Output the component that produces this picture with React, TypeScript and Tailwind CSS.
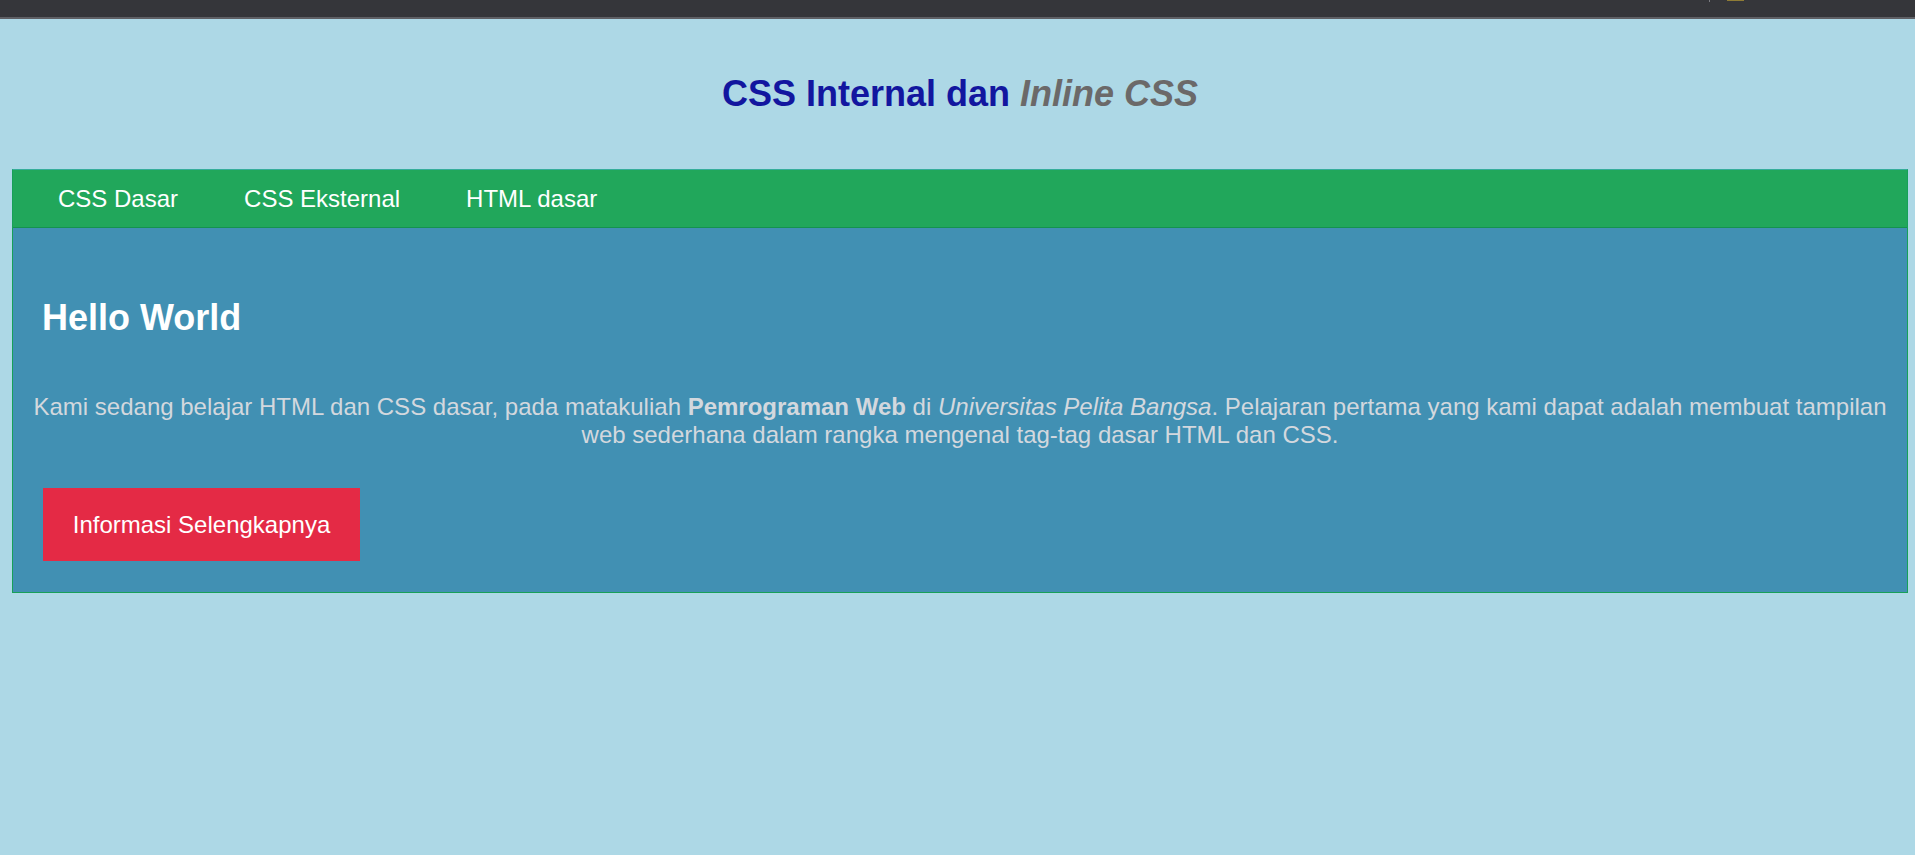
const navItems = ['CSS Dasar', 'CSS Eksternal', 'HTML dasar']

export default function App() {
  return (
    <div className="min-h-screen bg-[#add8e6] font-['Liberation_Sans',Arial,sans-serif]">
      {/* browser chrome strip */}
      <div className="relative h-[17px] bg-[#35363a]">
        <div className="absolute left-[1709px] top-0 h-[2px] w-[1px] bg-[#7a7b80]" />
        <div className="absolute left-[1727px] top-0 h-[1px] w-[17px] bg-[#8f7c36]" />
      </div>
      <div className="h-[2px] bg-[#5f6065]" />

      <div className="pl-[12px] pr-[7px] pb-10">
        <h1 className="mt-[54px] text-center text-[36px] leading-[41px] font-bold text-[#12169f]">
          CSS Internal dan <i className="text-[#6b6969]">Inline CSS</i>
        </h1>

        <div className="mt-[55px] border border-[#17a058] border-t-[#35ad9a]">
          {/* Nav */}
          <nav className="flex h-[58px] items-center border-b border-[#14924f] bg-[#21a75b] pl-[12px]">
            {navItems.map((item) => (
              <a
                key={item}
                href="#"
                className="px-[33px] text-[24px] leading-[28px] text-white"
              >
                {item}
              </a>
            ))}
          </nav>

          {/* Content */}
          <div className="bg-[#4190b3] pt-[69px] pb-[31px]">
            <h2 className="ml-[29px] text-[36px] leading-[41px] font-bold text-white">Hello World</h2>
            <p className="mt-[55px] text-center text-[24px] leading-[28px] text-[#d3d8de]">
              Kami sedang belajar HTML dan CSS dasar, pada matakuliah <b>Pemrograman Web</b> di{' '}
              <i>Universitas Pelita Bangsa</i>. Pelajaran pertama yang kami dapat adalah membuat tampilan web
              sederhana dalam rangka mengenal tag-tag dasar HTML dan CSS.
            </p>
            <button className="mt-[39px] ml-[30px] flex h-[73px] w-[317px] items-center justify-center bg-[#e42a45] text-[24px] leading-[28px] text-white">
              Informasi Selengkapnya
            </button>
          </div>
        </div>
      </div>
    </div>
  )
}
